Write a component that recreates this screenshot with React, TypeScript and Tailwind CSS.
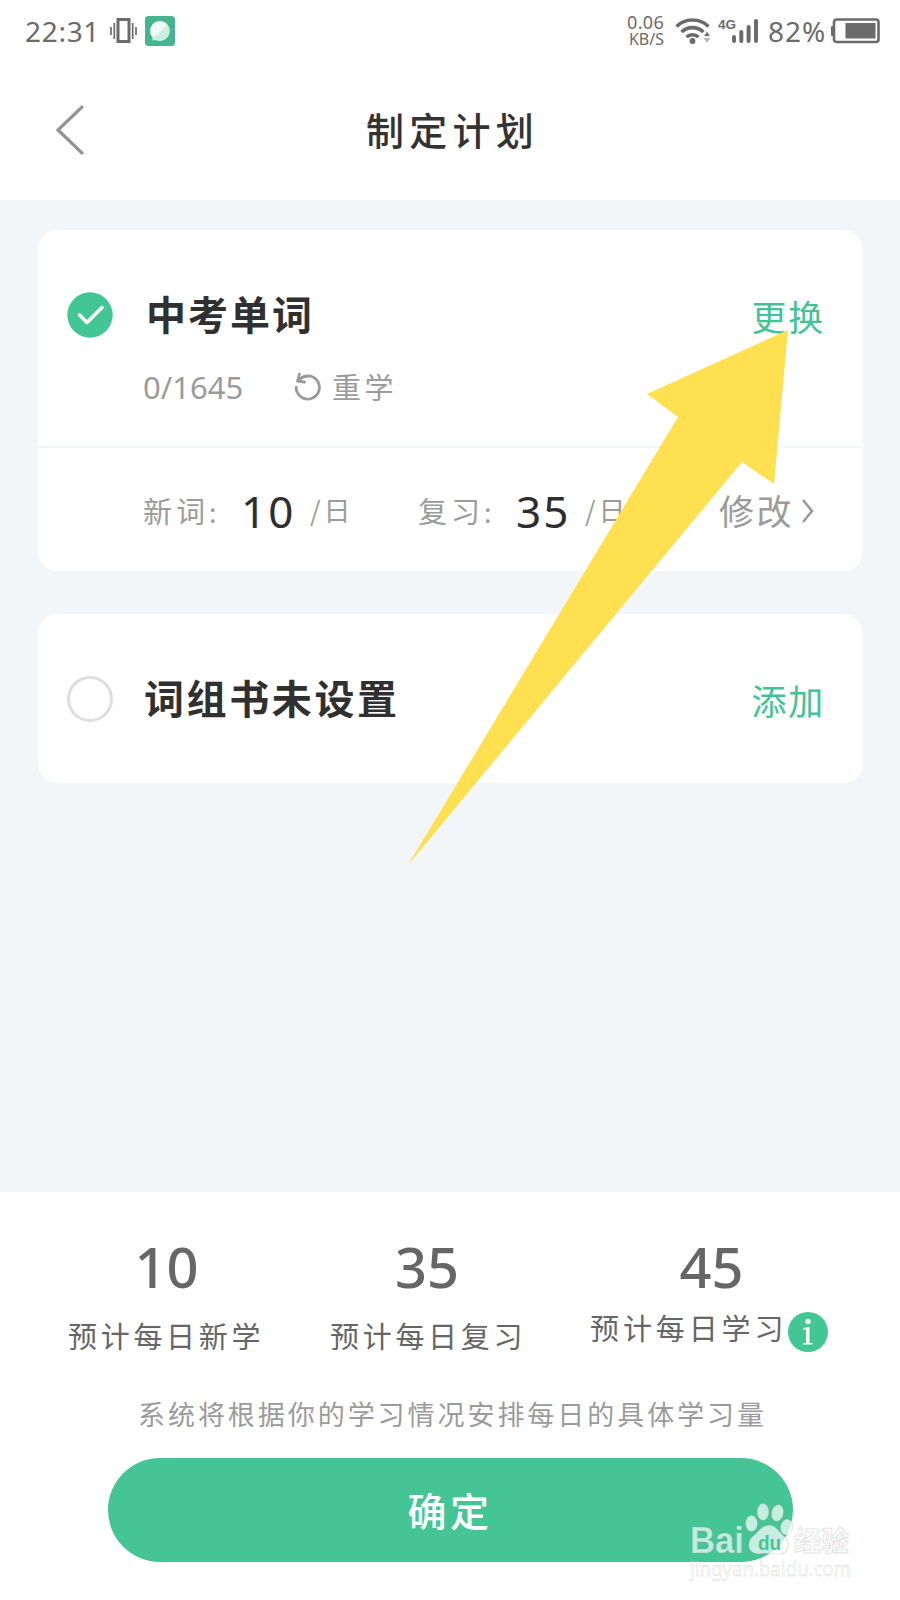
import type { ReactNode } from "react";

const cjk = "font-['Noto_Sans_CJK_SC',sans-serif]";
const num = "font-['Noto_Sans','Noto_Sans_CJK_SC',sans-serif]";

function StatusBar() {
  return (
    <div className={`flex h-[62px] items-center pl-[25px] pr-[20px] text-[#6b6b6b] ${num}`}>
      <span className="w-[76px] whitespace-nowrap text-[28px] leading-[62px] tracking-[0.700px]">22:31</span>
      <svg className="ml-[9px] h-[26px] w-[27px]" viewBox="0 0 27 26" fill="none" stroke="currentColor">
        <rect x="8" y="1.5" width="11" height="22" strokeWidth="3" />
        <path d="M4.3 5v16M22.7 5v16" strokeWidth="1.7" />
        <path d="M1 9v8M26 9v8" strokeWidth="1.7" />
      </svg>
      <svg className="ml-[8px] h-[30px] w-[30px]" viewBox="0 0 30 30">
        <defs>
          <linearGradient id="bubble" x1="0" y1="0" x2="1" y2="1">
            <stop offset="0.5" stopColor="#eefaf7" />
            <stop offset="0.52" stopColor="#cdeee2" />
          </linearGradient>
        </defs>
        <rect width="30" height="30" rx="3.5" fill="#46b48e" />
        <path d="M15 5a10 10 0 1 1-4.500 19L7 24.500l.8-2.700A10 10 0 0 1 15 5Z" fill="url(#bubble)" />
      </svg>
      <div className="ml-auto flex items-center">
        <div className="flex w-[40px] flex-col items-end text-[18px] leading-[17px]">
          <div className="tracking-[0.300px]">0.06</div>
          <div className="text-[16px]">KB/S</div>
        </div>
        <svg className="ml-[11px] h-[26px] w-[36px]" viewBox="0 0 36 26" fill="none" stroke="currentColor" strokeWidth="3.600">
          <path d="M1.500 8.500a23 23 0 0 1 32 0" />
          <path d="M6.500 14a16 16 0 0 1 22 0" />
          <path d="M11.500 19a9 9 0 0 1 12 0" />
          <circle cx="17.500" cy="23" r="2.900" fill="currentColor" stroke="none" />
          <path d="m32 13 3.500 5.500h-7z" fill="currentColor" stroke="#fff" strokeWidth="0.800" />
          <path d="m32 25-3.500-5h7z" fill="#b5b5b5" stroke="none" />
        </svg>
        <div className="ml-[7px] flex h-[26px] items-start">
          <span className="w-[13px] whitespace-nowrap font-['Liberation_Sans'] text-[13.500px] font-bold leading-[13px]">4G</span>
          <svg className="h-[26px] w-[28px]" viewBox="0 0 28 26" stroke="currentColor" strokeWidth="4" strokeLinecap="round">
            <path d="M3 19v4M10.300 14v9M17.600 9v14M25 3v20" />
          </svg>
        </div>
        <span className="ml-[9px] w-[63px] whitespace-nowrap text-[28px] leading-[62px] tracking-[1px]">82%</span>
        <svg className="h-[26px] w-[49px]" viewBox="0 0 49 26">
          <rect x="3" y="1.500" width="44.500" height="22.500" rx="2.500" fill="none" stroke="currentColor" strokeWidth="2.600" />
          <rect x="0" y="8" width="3" height="10" rx="1" fill="currentColor" />
          <rect x="14.500" y="5" width="30" height="15.500" fill="currentColor" />
        </svg>
      </div>
    </div>
  );
}

function Header() {
  return (
    <div className="grid h-[138px] grid-cols-3 items-start pt-[40px]">
      <svg className="ml-[55px] mt-[2px] h-[52px] w-[30px]" viewBox="0 0 30 52" fill="none" stroke="#949494" strokeWidth="3.200">
        <path d="M27 3 3 26l24 23" strokeLinecap="round" />
      </svg>
      <h1 className={`whitespace-nowrap pl-[5px] text-center text-[38px] font-medium leading-[54px] tracking-[5.300px] text-[#333] ${cjk}`}>制定计划</h1>
    </div>
  );
}

function Quota({ label, value, wide }: { label: string; value: string; wide: string }) {
  return (
    <div className={`flex items-center text-[#9b9b9b] ${wide}`}>
      <span className="w-[66px] whitespace-nowrap text-[29px] tracking-[4px]">{label}</span>
      <span className="w-[10px] pt-[4px] text-[27px]">:</span>
      <span className={`ml-[22px] w-[69px] whitespace-nowrap text-[44px] leading-[60px] tracking-[2px] text-[#2e2e2e] ${num}`}>{value}</span>
      <span className="whitespace-nowrap text-[27px]"><span className="mr-[3px]">/</span>日</span>
    </div>
  );
}

function Stat({ value, label, className, children }: { value: string; label: string; className: string; children?: ReactNode }) {
  return (
    <div className={`flex flex-col text-[#666] ${className}`}>
      <span className={`text-[56px] font-medium leading-[64px] ${num}`}>{value}</span>
      {children ?? <span className="mt-[17px] whitespace-nowrap text-[29px] leading-[40px] tracking-[3.700px]">{label}</span>}
    </div>
  );
}

function Watermark() {
  return (
    <svg className="absolute left-[680px] top-[1500px] h-[90px] w-[180px]" viewBox="0 0 180 90">
      <g fill="#fff" fillOpacity="0.700" stroke="#888" strokeOpacity="0.220" strokeWidth="1.200">
        <text x="10" y="53" fontFamily="Liberation Sans" fontWeight="bold" fontSize="36" textLength="54" lengthAdjust="spacingAndGlyphs">Bai</text>
        <ellipse cx="71.500" cy="23.500" rx="6" ry="8" />
        <ellipse cx="83" cy="12" rx="6" ry="8.500" />
        <ellipse cx="97.500" cy="13" rx="6" ry="8.500" transform="rotate(12 97.500 13)" />
        <ellipse cx="106.500" cy="27" rx="6" ry="8" transform="rotate(12 106.500 27)" />
        <path d="M89 25c7 0 10 7 15 11 7 6 5 18-5 18-7 0-14-1-20 0-12 0-13-12-6-18 6-5 9-11 16-11Z" />
        <text x="114" y="51" fontFamily="Noto Sans CJK SC" fontWeight="bold" fontSize="27.500" textLength="55">经验</text>
        <text x="10" y="76" fontFamily="Noto Sans" fontSize="20" strokeWidth="0.800" textLength="161" lengthAdjust="spacingAndGlyphs">jingyan.baidu.com</text>
      </g>
      <text x="78" y="50" fontFamily="Liberation Sans" fontWeight="bold" fontSize="20" fill="#45c596" textLength="23" lengthAdjust="spacingAndGlyphs">du</text>
    </svg>
  );
}

export default function App() {
  return (
    <div className={`relative flex h-[1600px] w-[900px] flex-col overflow-hidden bg-white ${cjk}`}>
      <StatusBar />
      <Header />
      <main className="flex h-[992px] flex-col gap-[43px] bg-[#f2f6f9] pl-[38px] pr-[37px] pt-[30px]">
        <section className="flex h-[341px] flex-col rounded-[20px] bg-white">
          <div className="flex h-[218px] items-start border-b-2 border-[#f3f7fa] pl-[29px] pr-[38px]">
            <svg className="mt-[62px] h-[46px] w-[46px]" viewBox="0 0 46 46">
              <circle cx="23" cy="23" r="22.700" fill="#43c695" />
              <path d="m12.500 23 7.500 7.500L35 15.500" fill="none" stroke="#fff" strokeWidth="3.600" strokeLinecap="round" strokeLinejoin="round" />
            </svg>
            <div className="ml-[30px] flex flex-col">
              <h2 className="mt-[53px] whitespace-nowrap pl-[3px] text-[40px] font-bold leading-[60px] tracking-[2px] text-[#303030]">中考单词</h2>
              <div className="mt-[24px] flex h-[40px] items-center text-[#9b9b9b]">
                <span className={`w-[151px] text-[31px] ${num}`}>0/1645</span>
                <svg className="h-[30px] w-[28px]" viewBox="0 0 28 30" fill="none" stroke="currentColor" strokeWidth="2.800" strokeLinecap="round" strokeLinejoin="round">
                  <path d="M2.200 15.500A11.600 11.600 0 1 0 4.500 8.500Q8 4.500 13.800 4.300M5.500 2 3.500 9.200l7 .8" />
                </svg>
                <span className="ml-[10px] whitespace-nowrap text-[29px] tracking-[3.500px]">重学</span>
              </div>
            </div>
            <a className="ml-auto mt-[60px] whitespace-nowrap text-[35px] leading-[52px] tracking-[1.800px] text-[#43c295]">更换</a>
          </div>
          <div className="flex h-[123px] items-center pl-[105px] pt-[2px]">
            <Quota label="新词" value="10" wide="w-[275px]" />
            <Quota label="复习" value="35" wide="w-[275px]" />
            <span className="ml-[26px] whitespace-nowrap text-[35px] tracking-[2.500px] text-[#9b9b9b]">修改</span>
            <svg className="ml-[7px] h-[26px] w-[14px]" viewBox="0 0 14 26" fill="none" stroke="#9b9b9b" strokeWidth="2.600">
              <path d="m2 2 9 11-9 11" />
            </svg>
          </div>
        </section>
        <section className="flex h-[169px] items-center rounded-[20px] bg-white pl-[29px] pr-[38px]">
          <span className="h-[46px] w-[46px] rounded-full border-[3px] border-[#dedede]" />
          <h2 className="ml-[31px] whitespace-nowrap pb-[3px] text-[40px] font-bold tracking-[2.600px] text-[#303030]">词组书未设置</h2>
          <a className="ml-auto whitespace-nowrap pt-[3px] text-[35px] tracking-[1.800px] text-[#43c295]">添加</a>
        </section>
      </main>
      <footer className="flex h-[408px] flex-col">
        <div className="flex h-[178px] items-start pl-[68px] pt-[42px]">
          <Stat className="w-[262px] [&>span:first-child]:w-[197px] [&>span:first-child]:text-center" value="10" label="预计每日新学" />
          <Stat className="w-[260px] [&>span:first-child]:w-[194px] [&>span:first-child]:text-center" value="35" label="预计每日复习" />
          <Stat className="w-[243px] [&>span:first-child]:text-center" value="45" label="预计每日学习">
            <div className="mt-[9px] flex items-start">
              <span className="w-[198px] whitespace-nowrap text-[29px] leading-[40px] tracking-[3.900px]">预计每日学习</span>
              <svg className="mt-[5px] h-[40px] w-[40px] shrink-0" viewBox="0 0 40 40">
                <circle cx="20" cy="20" r="20" fill="#43c695" />
                <circle cx="20" cy="9.500" r="2.700" fill="#fff" />
                <path d="m15 16 6.500-1v16h3v1.500h-9.500V31h3V17.500h-3Z" fill="#fff" />
              </svg>
            </div>
          </Stat>
        </div>
        <p className="h-[88px] whitespace-nowrap pl-[138px] pt-[24px] text-[27px] leading-[40px] tracking-[2.950px] text-[#9b9b9b]">系统将根据你的学习情况安排每日的具体学习量</p>
        <button className="mx-auto flex h-[104px] w-[685px] items-center justify-center rounded-full bg-[#45c596] pb-[2px] text-[39px] font-medium tracking-[3.500px] text-white">确定</button>
      </footer>
      <svg className="absolute left-[400px] top-[320px] h-[560px] w-[400px]" viewBox="400 320 400 560">
        <path d="M788 330 647 394l31 23-270 448 334-403 32 22Z" fill="#fee050" />
      </svg>
      <Watermark />
    </div>
  );
}
